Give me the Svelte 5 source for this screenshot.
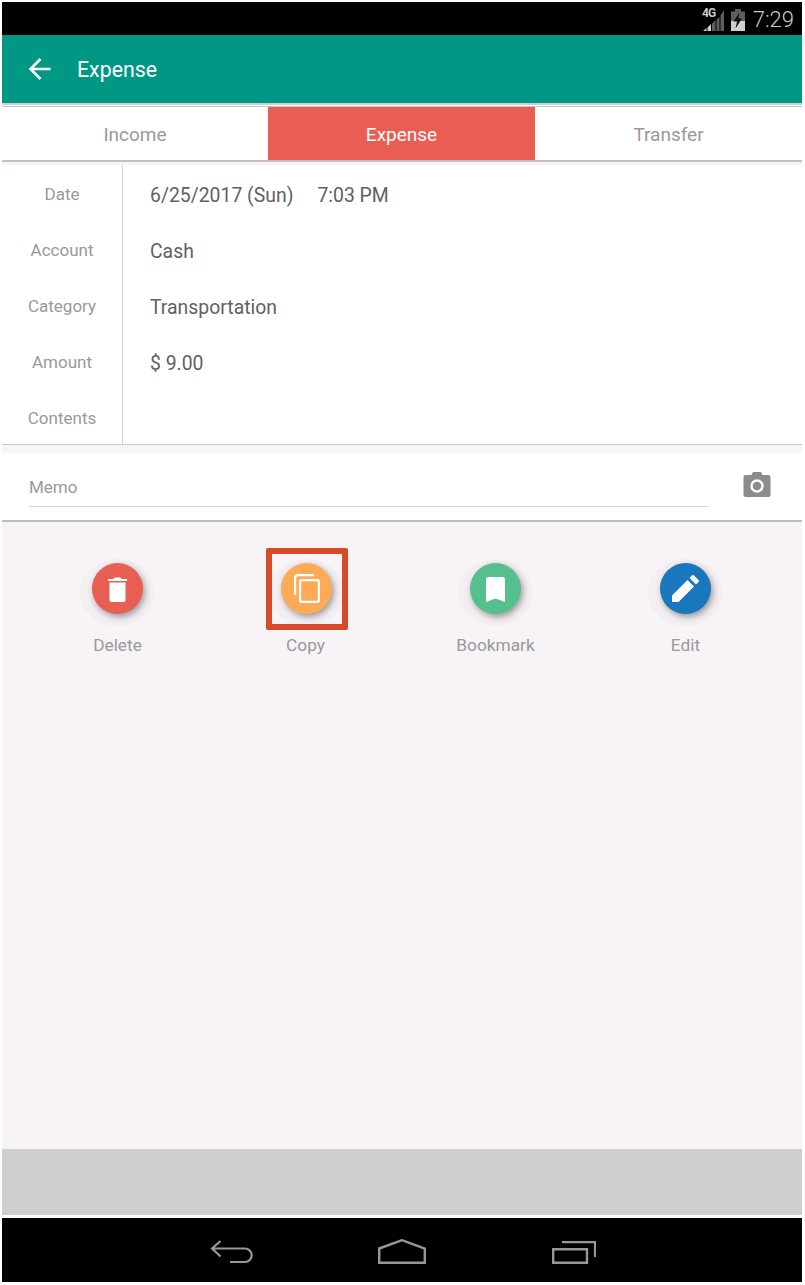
<script>
  const tabs = [
    { label: 'Income', active: false },
    { label: 'Expense', active: true },
    { label: 'Transfer', active: false }
  ];
  const rows = [
    { label: 'Date', value: ['6/25/2017 (Sun)', '7:03 PM'] },
    { label: 'Account', value: ['Cash'] },
    { label: 'Category', value: ['Transportation'] },
    { label: 'Amount', value: ['$ 9.00'] },
    { label: 'Contents', value: [] }
  ];
</script>

<div class="frame">
  <div class="status">
    <span class="net">4G</span>
    <svg class="signal" width="21" height="21" viewBox="0 0 21 21">
      <path d="M0 21H3.500V18L0 21Z M4.500 21H8V14L4.500 17.500Z" fill="#cfcfcf" />
      <path d="M9 21H12.500V10L9 13.500Z M13.500 21H16.500V7L13.500 9.500Z M17.500 21H21V0L17.500 5.500Z" fill="#5e5e5e" />
    </svg>
    <svg class="battery" width="14" height="22" viewBox="0 0 14 22">
      <path d="M4 0H10V2.500H14V22H0V2.500H4Z" fill="#5e5e5e" />
      <path d="M0 12H14V22H0Z" fill="#d0d0d0" />
      <path d="M8.500 3.500L2.500 12.500H6L4.500 19.500L11 9.500H7.500Z" fill="#111" />
    </svg>
    <span class="clock">7:29</span>
  </div>

  <header class="appbar">
    <svg width="24" height="24" viewBox="0 0 24 24" class="back">
      <path d="M22.500 12H4M12.500 2L2.500 12L12.500 22" fill="none" stroke="#fff" stroke-width="2.600" />
    </svg>
    <h1>Expense</h1>
  </header>

  <nav class="tabs">
    {#each tabs as t}
      <div class="tab" class:active={t.active}>{t.label}</div>
    {/each}
  </nav>

  <section class="form">
    <div class="labels">
      {#each rows as r}<div class="lab">{r.label}</div>{/each}
    </div>
    <div class="values">
      {#each rows as r}
        <div class="val">
          {#each r.value as v}<span>{v}</span>{/each}
        </div>
      {/each}
    </div>
  </section>

  <section class="memo">
    <div class="memo-field">Memo</div>
    <svg class="camera" width="28" height="25" viewBox="0 0 28 25">
      <path d="M2.500 3H8.500L10 0H18L19.500 3H25.500A2 2 0 0 1 27.500 5V23A2 2 0 0 1 25.500 25H2.500A2 2 0 0 1 .5 23V5A2 2 0 0 1 2.500 3Z" fill="#8c8c8c" />
      <circle cx="14" cy="14" r="5.500" fill="none" stroke="#fff" stroke-width="2.400" />
    </svg>
  </section>

  <main class="content">
    <div class="action a1">
      <div class="halo">
        <div class="fab red">
          <svg class="nudge" width="19" height="25" viewBox="0 0 19 25">
            <path d="M0 2H5.500L6.500 0.500H12.500L13.500 2H19V4H0Z" fill="#fff" />
            <path d="M1.500 5.500H17.500V23A2 2 0 0 1 15.500 25H3.500A2 2 0 0 1 1.500 23Z" fill="#fff" />
          </svg>
        </div>
      </div>
      <span>Delete</span>
    </div>
    <div class="action a2">
      <div class="mark"></div>
      <div class="halo">
        <div class="fab orange">
          <svg width="26" height="29" viewBox="0 0 26 29">
            <path d="M20 1.100H4A3 3 0 0 0 1.100 4V21" fill="none" stroke="#fff" stroke-width="2.200" />
            <rect x="6.100" y="6.100" width="18.800" height="21.800" rx="2" fill="none" stroke="#fff" stroke-width="2.200" />
          </svg>
        </div>
      </div>
      <span class="copy-label">Copy</span>
    </div>
    <div class="action a3">
      <div class="halo">
        <div class="fab green">
          <svg class="nudge" width="19" height="25" viewBox="0 0 19 25">
            <path d="M2.500 0H16.500A2.500 2.500 0 0 1 19 2.500V25L9.500 21.500L0 25V2.500A2.500 2.500 0 0 1 2.500 0Z" fill="#fff" />
          </svg>
        </div>
      </div>
      <span>Bookmark</span>
    </div>
    <div class="action a4">
      <div class="halo">
        <div class="fab blue">
          <svg width="27" height="27" viewBox="0 0 27 27">
            <path d="M0 20.500L15.500 5L22 11.500L6.500 27H0Z M17.500 3L19.800 .6A1.500 1.500 0 0 1 22 .6L26.400 5A1.500 1.500 0 0 1 26.400 7.200L24 9.500Z" fill="#fff" />
          </svg>
        </div>
      </div>
      <span>Edit</span>
    </div>
  </main>

  <div class="adbar"></div>

  <footer class="navbar">
    <svg class="nav-back" width="44" height="24" viewBox="0 0 44 24">
      <path d="M10.500 1L2 8.500L10.500 16.500M2 8.500H35A6.500 6.500 0 0 1 35 22H20" fill="none" stroke="#979797" stroke-width="2.200" />
    </svg>
    <svg class="nav-home" width="48" height="25" viewBox="0 0 48 25">
      <path d="M1.200 9.500L24 1.200L46.800 9.500V23.800H1.200Z" fill="none" stroke="#979797" stroke-width="2.400" />
    </svg>
    <svg class="nav-recent" width="44" height="23" viewBox="0 0 44 23">
      <path d="M10 1.100H43V16" fill="none" stroke="#979797" stroke-width="2.200" />
      <path d="M1.200 8.200H35V21.800H1.200Z" fill="none" stroke="#979797" stroke-width="2.400" />
    </svg>
  </footer>
</div>

<style>
  :global(body) {
    margin: 0;
    background: #fff;
  }
  .frame {
    box-sizing: border-box;
    width: 805px;
    height: 1285px;
    padding: 2px 3px 3px 2px;
    display: flex;
    flex-direction: column;
    background: #fff;
    font-family: Roboto, "Liberation Sans", sans-serif;
    overflow: hidden;
  }
  .status {
    height: 33px;
    background: #000;
    display: flex;
    align-items: center;
    justify-content: flex-end;
    position: relative;
    padding-right: 8px;
    flex: none;
  }
  .net {
    position: absolute;
    left: 700px;
    top: 4px;
    font-size: 12px;
    font-weight: 700;
    color: #c8c8c8;
    letter-spacing: -0.9px;
  }
  .signal {
    margin-right: 7px;
    margin-top: 3px;
  }
  .battery {
    margin-right: 8px;
    margin-top: 2px;
  }
  .clock {
    color: #cacaca;
    font-size: 22px;
    font-weight: 300;
    margin-top: 2px;
  }
  .appbar {
    height: 68px;
    background: #009785;
    display: flex;
    align-items: center;
    gap: 25px;
    padding-left: 26px;
    flex: none;
  }
  h1 {
    margin: 0;
    font-size: 21.300px;
    font-weight: 400;
    color: #fff;
  }
  .tabs {
    flex: none;
    display: grid;
    grid-template-columns: 266px 267px 267px;
    height: 53px;
    margin-top: 4px;
    background: #fff;
    box-shadow: 0 -1px 0 #c4c4c4, 0 -2px 0 #fff, 0 -4px 0 #cfcfcf;
    border-bottom: 2px solid #c0c0c0;
  }
  .tab {
    display: flex;
    align-items: center;
    justify-content: center;
    font-size: 19px;
    color: #999;
    padding-top: 2px;
    box-sizing: border-box;
  }
  .tab.active {
    background: #e95e53;
    color: #fff;
  }
  .form {
    flex: none;
    margin-top: 3px;
    height: 280px;
    box-sizing: border-box;
    background: #fff;
    border-bottom: 1px solid #cacaca;
    display: flex;
    box-shadow: 0 -3px 0 #f7f3f7;
  }
  .labels {
    width: 120px;
    border-right: 1px solid #d4d4d4;
    padding-top: 1px;
  }
  .lab {
    height: 56px;
    display: flex;
    align-items: center;
    justify-content: center;
    font-size: 17px;
    color: #999;
  }
  .values {
    padding-left: 27px;
    padding-top: 2px;
  }
  .val {
    height: 56px;
    display: flex;
    align-items: center;
    gap: 24px;
    font-size: 19.400px;
    color: #616161;
  }
  .memo {
    flex: none;
    margin-top: 8px;
    height: 67px;
    background: #fff;
    display: flex;
    align-items: flex-start;
    box-shadow: 0 -8px 0 #f7f3f7;
    padding-left: 27px;
    border-bottom: 2px solid #bdbdbd;
  }
  .memo-field {
    width: 680px;
    height: 54px;
    box-sizing: border-box;
    border-bottom: 1px solid #d4d4d4;
    font-size: 17px;
    color: #999;
    padding-top: 24px;
    line-height: 20px;
  }
  .camera {
    margin-left: 34px;
    margin-top: 19px;
  }
  .content {
    flex: 1;
    background: #f7f3f7;
    position: relative;
    display: grid;
    grid-template-columns: 189px 189px 190px 190px;
    padding: 37px 0 0 21px;
    align-content: start;
  }
  .action {
    width: 189px;
    position: relative;
    display: flex;
    flex-direction: column;
    align-items: center;
    font-size: 17.300px;
    color: #999;
  }
  .action span {
    margin-top: 7px;
    line-height: 24px;
  }
  .action .copy-label {
    margin-right: 2px;
  }
  .halo {
    width: 75px;
    height: 67px;
    border-radius: 50%;
    background: #f2eef2;
    display: flex;
    align-items: center;
    justify-content: center;
  }
  .fab {
    width: 51px;
    height: 51px;
    margin-top: -8px;
    border-radius: 50%;
    display: flex;
    align-items: center;
    justify-content: center;
    box-shadow: 2px 3px 6px rgba(0, 0, 0, 0.36);
    position: relative;
    z-index: 1;
  }
  .fab svg {
    display: block;
  }
  .fab .nudge {
    margin-top: 2px;
  }
  .red { background: #e95e53; }
  .orange { background: #ffaa56; }
  .green { background: #55bf8d; }
  .blue { background: #1877bd; }
  .mark {
    position: absolute;
    left: 54px;
    top: -11px;
    width: 82px;
    height: 82px;
    box-sizing: border-box;
    border: 6px solid #d64a28;
    border-radius: 2px;
    z-index: 2;
  }
  .adbar {
    flex: none;
    height: 66px;
    background: #cfcfcf;
  }
  .navbar {
    flex: none;
    margin-top: 3px;
    height: 64px;
    background: #000;
    display: flex;
    align-items: center;
    padding-top: 4px;
    box-sizing: border-box;
    padding-left: 208px;
  }
  .nav-home {
    margin-left: 124px;
    margin-top: -1px;
  }
  .nav-recent {
    margin-left: 126px;
    margin-top: 1px;
  }
</style>
